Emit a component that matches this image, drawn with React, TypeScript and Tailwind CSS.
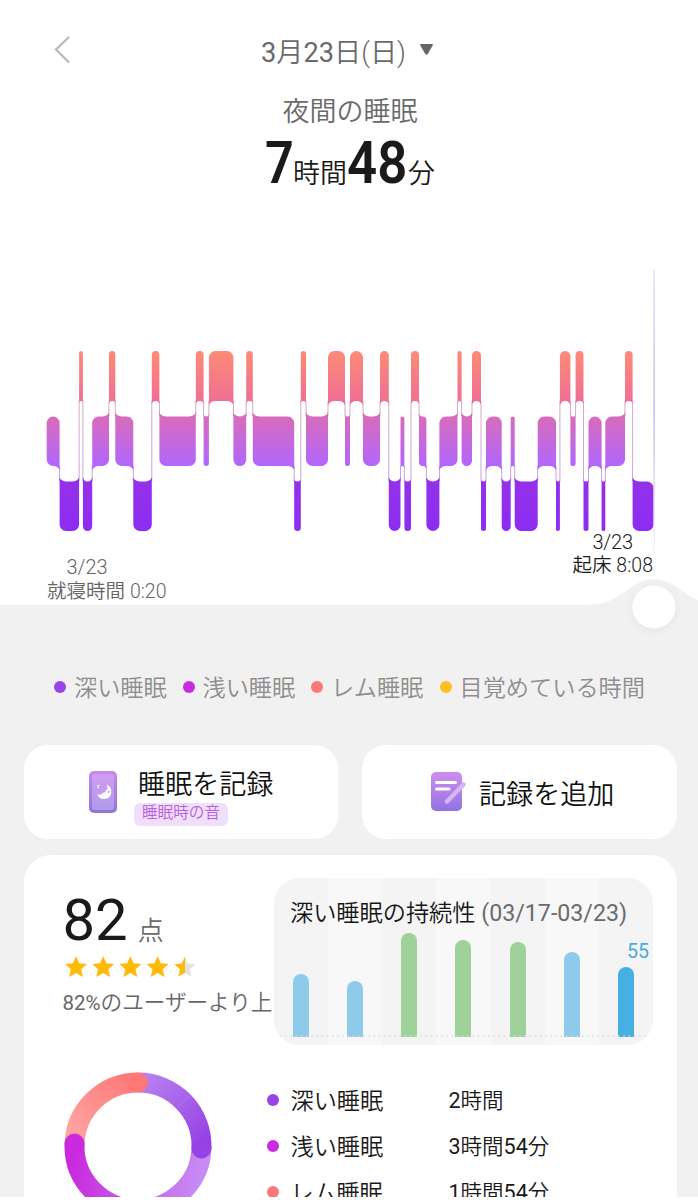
import React from "react";

type Level = "R" | "L" | "D";

const BAND: Record<Level, [number, number]> = {
  R: [351, 401],
  L: [416.5, 466],
  D: [481.5, 531],
};

const DEPTH: Record<Level, number> = { R: 0, L: 1, D: 2 };

const STAGES: [Level, number][] = [
  ["L", 46.7], ["D", 59.6], ["R", 79.1], ["D", 82.9], ["L", 92.2], ["R", 109], ["L", 115.3],
  ["D", 133.3], ["R", 151.8], ["L", 159.4], ["R", 195.8], ["L", 203.6], ["R", 208.9], ["L", 233.4],
  ["R", 246.2], ["L", 252.8], ["D", 294.2], ["R", 300.8], ["L", 306], ["R", 328], ["L", 345],
  ["R", 350], ["L", 363], ["R", 380], ["D", 388.8], ["L", 400.5], ["D", 404.4], ["R", 411],
  ["L", 419], ["D", 426.4], ["L", 439.4], ["R", 457.5], ["L", 461.6], ["R", 472], ["D", 481],
  ["L", 486], ["D", 501.7], ["L", 510.7], ["D", 514.7], ["L", 537.7], ["D", 556], ["R", 559.9],
  ["L", 570.4], ["R", 575.6], ["D", 583.5], ["L", 588.5], ["D", 601.6], ["L", 605.3], ["R", 625],
  ["D", 632.6],
];
const CHART_END = 653.5;

function stagePath(i: number) {
  const [level, x0] = STAGES[i];
  const x1 = i + 1 < STAGES.length ? STAGES[i + 1][1] : CHART_END;
  const [y0, y1] = BAND[level];
  const r = Math.min(6.5, (x1 - x0) / 2);
  const f = Math.min(5, r);
  const d = DEPTH[level];
  const prev = i > 0 ? DEPTH[STAGES[i - 1][0]] : d;
  const next = i + 1 < STAGES.length ? DEPTH[STAGES[i + 1][0]] : d;
  // A corner that joins a neighbour on the same side flares outwards; the others are rounded.
  const corner = (flare: boolean, x: number, y: number) =>
    flare ? `A${r} ${f} 0 0 0 ${x} ${y}` : `A${r} ${r} 0 0 1 ${x} ${y}`;
  const tl = prev < d;
  const tr = next < d;
  const bl = prev > d;
  const br = next > d;
  return (
    `M${x0} ${tl ? y0 - f : y0 + r}${corner(tl, x0 + r, y0)}L${x1 - r} ${y0}${corner(tr, x1, tr ? y0 - f : y0 + r)}` +
    `L${x1} ${br ? y1 + f : y1 - r}${corner(br, x1 - r, y1)}L${x0 + r} ${y1}${corner(bl, x0, bl ? y1 + f : y1 - r)}Z`
  );
}

function SleepChart() {
  return (
    <svg className="block shrink-0" width="698" height="450" viewBox="0 190 698 450">
      <defs>
        <linearGradient id="stage" gradientUnits="userSpaceOnUse" x1="0" y1="351" x2="0" y2="531">
          <stop offset="0" stopColor="#fd8b75" />
          <stop offset="0.28" stopColor="#ef6f94" />
          <stop offset="0.36" stopColor="#d96cba" />
          <stop offset="0.64" stopColor="#b166fd" />
          <stop offset="0.69" stopColor="#9631e8" />
          <stop offset="1" stopColor="#8c2df2" />
        </linearGradient>
        <linearGradient id="link" gradientUnits="userSpaceOnUse" x1="0" y1="380" x2="0" y2="500">
          <stop offset="0" stopColor="#dcaac4" />
          <stop offset="1" stopColor="#c4a2e0" />
        </linearGradient>
        <linearGradient id="cursor" x1="0" y1="0" x2="0" y2="1">
          <stop offset="0" stopColor="#dcd6ec" />
          <stop offset="0.5" stopColor="#c0a6ea" />
          <stop offset="1" stopColor="#f4f0fa" />
        </linearGradient>
        <filter id="soft" x="-50%" y="-50%" width="200%" height="200%">
          <feDropShadow dx="0" dy="2" stdDeviation="4" floodColor="#000" floodOpacity="0.05" />
        </filter>
      </defs>
      <path d="M0 604.500H590C622 604.500 630 579 654 579C672 579 684 595 698 600V640H0Z" fill="#f1f1f1" />
      {STAGES.slice(1).map(([level, x], i) => {
        const a = BAND[level];
        const b = BAND[STAGES[i][0]];
        const top = Math.min(a[1], b[1]);
        const bottom = Math.max(a[0], b[0]);
        return <rect key={x} x={x - 0.5} y={top} width="1" height={bottom - top} fill="url(#link)" />;
      })}
      {STAGES.map((s, i) => (
        <path key={s[1]} d={stagePath(i)} fill="url(#stage)" />
      ))}
      <rect x="653.500" y="270" width="1.200" height="285" fill="url(#cursor)" />
      <circle cx="654" cy="607" r="21.500" fill="#fff" filter="url(#soft)" />
      <g fontSize="20" className="font-['Roboto','Noto_Sans_CJK_JP',sans-serif]">
        <text x="66.500" y="574" fill="#666" textLength="41">3/23</text>
        <text x="47" y="597.500" fill="#666" textLength="119.500" fontSize="19.500"><tspan fontWeight="350">就寝時間</tspan> 0:20</text>
        <text x="592.500" y="548.500" fill="#1c1c1c" textLength="40.500">3/23</text>
        <text x="572.500" y="571.500" fill="#1c1c1c" textLength="80.500" fontSize="19.500"><tspan fontWeight="350">起床</tspan> 8:08</text>
      </g>
    </svg>
  );
}

const LEGEND = [
  { label: "深い睡眠", dot: "bg-[#9745e6]", width: "w-[128.500px]" },
  { label: "浅い睡眠", dot: "bg-[#c92be0]", width: "w-[128.500px]" },
  { label: "レム睡眠", dot: "bg-[#fc7878]", width: "w-[128.500px]" },
  { label: "目覚めている時間", dot: "bg-[#fdbf21]", width: "w-[210px]" },
];

function PhoneIcon() {
  return (
    <svg width="30" height="44" viewBox="0 0 30 44" className="block shrink-0">
      <defs>
        <linearGradient id="ph1" x1="0" y1="0" x2="0" y2="1">
          <stop offset="0" stopColor="#c38aeb" />
          <stop offset="1" stopColor="#9273dc" />
        </linearGradient>
        <linearGradient id="ph2" x1="0" y1="0" x2="0" y2="1">
          <stop offset="0" stopColor="#cf9df2" />
          <stop offset="1" stopColor="#b09aeb" />
        </linearGradient>
      </defs>
      <rect x="1" y="1" width="28" height="42" rx="5" fill="url(#ph1)" />
      <rect x="4" y="4" width="22" height="36" rx="2.500" fill="url(#ph2)" />
      <path d="M18.500 14.500C25.500 17 25 29 16 29C12.500 29 10 27 9.300 24C11.500 25.300 14 24.800 14.600 22.500C16.500 23.500 18 22 17.500 20.500C20 20 20 17 18.500 14.500Z" fill="#fff" />
      <path d="M19.500 21.500L22 21L21.500 22.500L20 22.800Z" fill="#b78eea" />
      <path d="M9 15.500H11L9.500 17.700H11" stroke="#fff" strokeWidth="0.800" fill="none" />
    </svg>
  );
}

function NoteIcon() {
  return (
    <svg width="38" height="42" viewBox="0 0 38 42" className="block shrink-0">
      <defs>
        <linearGradient id="nt" x1="0" y1="0" x2="0" y2="1">
          <stop offset="0" stopColor="#cc8eef" />
          <stop offset="1" stopColor="#9273e2" />
        </linearGradient>
      </defs>
      <rect x="1" y="1" width="31" height="39" rx="5" fill="url(#nt)" />
      <path d="M6.500 11.500H25.500M6.500 18H19" stroke="#fff" strokeWidth="3" strokeLinecap="round" />
      <path d="M17 30.500L33.500 13.500" stroke="#d6b4f5" strokeWidth="4.600" strokeLinecap="round" />
    </svg>
  );
}

const STAR = "M11 0.800L14 7.600L21.400 8.300L15.900 13.200L17.500 20.400L11 16.700L4.500 20.400L6.100 13.200L0.600 8.300L8 7.600Z";

function Stars() {
  return (
    <svg width="132" height="22" viewBox="0 0 132 22" className="block">
      <defs>
        <linearGradient id="half">
          <stop offset="0.5" stopColor="#ffba08" />
          <stop offset="0.5" stopColor="#e2e2e2" />
        </linearGradient>
      </defs>
      {[0, 1, 2, 3, 4].map((n) => (
        <path
          key={n}
          d={STAR}
          transform={`translate(${n * 27.2} 0)`}
          fill={n < 4 ? "#ffba08" : "url(#half)"}
          stroke={n < 4 ? "#ffba08" : "none"}
          strokeWidth="0.600"
          strokeLinejoin="round"
        />
      ))}
    </svg>
  );
}

const DAYS = [
  { h: 63, color: "bg-[#8ecbea]" },
  { h: 56, color: "bg-[#8ecbea]" },
  { h: 104, color: "bg-[#9fd29a]" },
  { h: 97, color: "bg-[#9fd29a]" },
  { h: 95.5, color: "bg-[#9fd29a]" },
  { h: 85.5, color: "bg-[#8ecbea]" },
  { h: 70, color: "bg-[#46b0e2]" },
];

function WeekPanel() {
  return (
    <div className="relative h-[167px] w-[379px] shrink-0 overflow-hidden rounded-[26px] bg-[#f4f4f4]">
      <div className="grid h-full grid-cols-7">
        {DAYS.map((d, i) => (
          <div key={i} className="flex items-end justify-center pb-2 odd:bg-[#f4f4f4] even:bg-[#f8f8f8]">
            <div className={`w-4 rounded-t-full ${d.color}`} style={{ height: d.h }} />
          </div>
        ))}
      </div>
      <svg className="absolute bottom-2 left-0" width="379" height="2">
        <path d="M6 1H375" stroke="#d8d8d8" strokeWidth="1.300" strokeDasharray="1.600 3.600" />
      </svg>
      <div className="absolute left-4 top-[17px] whitespace-nowrap text-[23.200px] leading-9 text-[#161616]">
        深い睡眠の持続性<span className="font-normal text-[#6b6b6b]"> (03/17-03/23)</span>
      </div>
      <div className="absolute right-1 top-[62px] text-[19.500px] font-normal leading-6 text-[#46abdb]">55</div>
    </div>
  );
}

function polar(deg: number): [number, number] {
  const a = ((deg - 90) * Math.PI) / 180;
  return [74 + 63.5 * Math.cos(a), 74 + 63.5 * Math.sin(a)];
}

function arc(from: number, to: number) {
  const [x0, y0] = polar(from);
  const [x1, y1] = polar(to);
  return `M${x0} ${y0}A63.500 63.500 0 0 1 ${x1} ${y1}`;
}

function Donut() {
  const slices = [
    { id: "d1", from: 0, to: 92.3, end: "#9742e5" },
    { id: "d2", from: 92.3, to: 272.2, end: "#c92ade" },
    { id: "d3", from: 272.2, to: 360, end: "#fd7777" },
  ];
  return (
    <svg width="148" height="148" viewBox="0 0 148 148" className="block shrink-0">
      <defs>
        <linearGradient id="d1" gradientUnits="userSpaceOnUse" x1="76" y1="10" x2="137" y2="72">
          <stop offset="0" stopColor="#b681f0" />
          <stop offset="1" stopColor="#9742e5" />
        </linearGradient>
        <linearGradient id="d2" gradientUnits="userSpaceOnUse" x1="137" y1="100" x2="10" y2="78">
          <stop offset="0" stopColor="#c68bf4" />
          <stop offset="1" stopColor="#c92ade" />
        </linearGradient>
        <linearGradient id="d3" gradientUnits="userSpaceOnUse" x1="10" y1="70" x2="74" y2="10">
          <stop offset="0" stopColor="#ffa6a3" />
          <stop offset="1" stopColor="#fd7777" />
        </linearGradient>
      </defs>
      {slices.map((s) => (
        <path key={s.id} d={arc(s.from, s.to)} fill="none" stroke={`url(#${s.id})`} strokeWidth="20" />
      ))}
      {slices.map((s) => {
        const [x, y] = polar(s.to);
        return <circle key={s.id} cx={x} cy={y} r="10" fill={s.end} />;
      })}
      <path d="M113.500 35L126 23.500" stroke="#bb83ef" strokeWidth="0.700" />
    </svg>
  );
}

const TOTALS: { label: string; value: [string, string][]; dot: string }[] = [
  { label: "深い睡眠", value: [["2", "時間"]], dot: "bg-[#9745e6]" },
  { label: "浅い睡眠", value: [["3", "時間"], ["54", "分"]], dot: "bg-[#c92be0]" },
  { label: "レム睡眠", value: [["1", "時間"], ["54", "分"]], dot: "bg-[#fc7878]" },
];

export default function App() {
  return (
    <div className="h-[1200px] w-[698px] overflow-hidden bg-white font-['Roboto','Noto_Sans_CJK_JP',sans-serif] font-[350]">
      <div className="flex h-[1197px] flex-col overflow-hidden bg-[#f1f1f1]">
        <header className="flex h-[190px] shrink-0 flex-col bg-white">
          <div className="ml-[203px] h-[2px] w-[32px] rounded-b-sm bg-[#8930c4]" />
          <div className="mt-[30px] flex h-10 items-center">
            <svg width="18" height="28" viewBox="0 0 18 28" className="ml-[53px]">
              <path d="M15.500 1.500L3 13.500L15.500 26" fill="none" stroke="#bababa" strokeWidth="2.200" strokeLinecap="round" />
            </svg>
            <span className="ml-[190px] w-[147px] whitespace-nowrap pt-1.5 text-[27.200px] leading-10 text-[#6a6a6a]">
              <span className="font-normal">3</span>月<span className="font-normal">23</span>日(日)
            </span>
            <svg width="15" height="13" viewBox="0 0 15 13" className="mb-0.5 ml-[11px]">
              <path d="M2 1H13Q14.500 1 13.700 2.500L8.700 11Q7.500 12.500 6.300 11L1.300 2.500Q0.500 1 2 1Z" fill="#666" />
            </svg>
          </div>
          <div className="mt-[22px] pl-0.5 text-center text-[27px] leading-10 text-[#6a6a6a]">夜間の睡眠</div>
          <div className="ml-[265px] mt-px flex h-[60px] items-baseline text-[27px] leading-[60px] text-[#1a1a1a]">
            <span className="w-[28px] text-[60px] font-[560]"><span className="inline-block origin-left scale-x-[0.84]">7</span></span>
            <span className="w-[54px]">時間</span>
            <span className="w-[61px] text-[60px] font-[560]"><span className="inline-block origin-left scale-x-[0.88]">48</span></span>
            <span>分</span>
          </div>
        </header>

        <div className="h-[450px] shrink-0 bg-white"><SleepChart /></div>

        <div className="mt-[27px] flex h-10 shrink-0 items-center pl-[54px]">
          {LEGEND.map((l) => (
            <div key={l.label} className={`flex shrink-0 items-center ${l.width}`}>
              <span className={`mr-2 h-3 w-3 shrink-0 rounded-full ${l.dot}`} />
              <span className="whitespace-nowrap pt-0.5 text-[23.200px] leading-10 text-[#8e8e8e]">{l.label}</span>
            </div>
          ))}
        </div>

        <div className="mt-[38px] flex shrink-0 gap-6 pl-[23.500px] text-[27.100px] text-[#111]">
          <button className="flex h-[94px] w-[314.500px] items-center rounded-3xl bg-white pl-[64.500px]">
            <PhoneIcon />
            <span className="ml-4 flex flex-col items-start pt-1.5">
              <span className="ml-1 whitespace-nowrap leading-[40px]">睡眠を記録</span>
              <span className="-mt-0.5 flex h-[23px] w-[94px] items-center justify-center rounded-md bg-[#f0dffb] text-[15.600px] text-[#b85ee0]">睡眠時の音</span>
            </span>
          </button>
          <button className="flex h-[94px] w-[314.500px] items-center rounded-3xl bg-white pl-[68px]">
            <NoteIcon />
            <span className="ml-[11px] mt-1.5 whitespace-nowrap">記録を追加</span>
          </button>
        </div>

        <main className="ml-[23.500px] mt-4 h-[343px] w-[653px] shrink-0 rounded-t-[27px] bg-white">
          <div className="flex pt-[23px]">
            <div className="w-[250.500px] pl-[39px]">
              <div className="flex h-[75px] items-baseline text-[#1a1a1a]">
                <span className="text-[58px] font-normal leading-[84px]">82</span>
                <span className="ml-2.5 text-[26px] text-[#6a6a6a]">点</span>
              </div>
              <div className="ml-0.5 mt-[3px]"><Stars /></div>
              <div className="mt-[9px] whitespace-nowrap text-[20.500px] leading-8 text-[#666]">
                <span className="font-normal">82%</span><span className="text-[21.600px]">のユーザーより上</span>
              </div>
            </div>
            <WeekPanel />
          </div>
          <div className="mt-[26.500px] flex pl-[40px]">
            <Donut />
            <div className="ml-[55px] mt-[5px] text-[23.200px] text-[#1a1a1a]">
              {TOTALS.map((t) => (
                <div key={t.label} className="flex h-[46px] items-center">
                  <span className={`mr-3 h-3 w-3 rounded-full ${t.dot}`} />
                  <span className="w-[158px] pt-1">{t.label}</span>
                  <span className="whitespace-nowrap pt-1 text-[21.500px]">
                    {t.value.map(([n, unit]) => (
                      <React.Fragment key={unit}><span className="font-normal">{n}</span>{unit}</React.Fragment>
                    ))}
                  </span>
                </div>
              ))}
            </div>
          </div>
        </main>
      </div>
    </div>
  );
}
